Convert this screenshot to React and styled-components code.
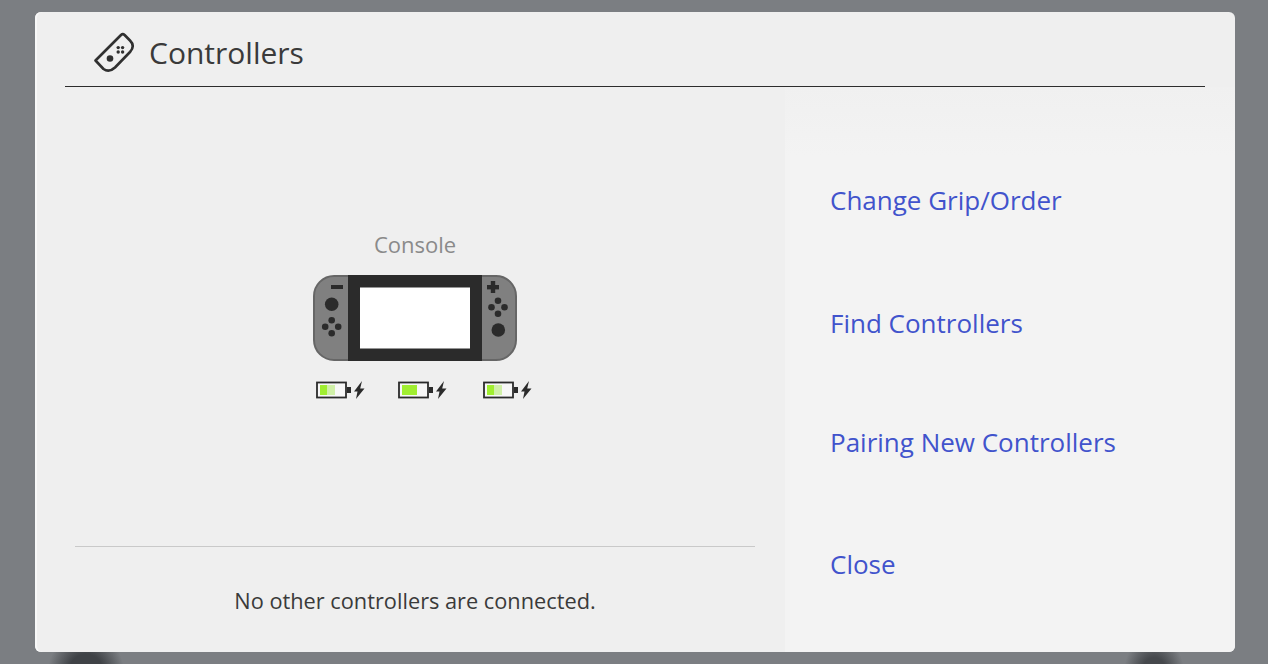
import styled, { createGlobalStyle } from "styled-components";

const GlobalStyle = createGlobalStyle`
  html, body {
    margin: 0;
    height: 100%;
  }
  body {
    font-family: "Open Sans", "Liberation Sans", sans-serif;
    background:
      radial-gradient(ellipse 38px 40px at 86px 672px, #3f4246 45%, rgba(63, 66, 70, 0) 100%),
      radial-gradient(ellipse 30px 36px at 1154px 672px, #45484c 40%, rgba(69, 72, 76, 0) 100%),
      #7b7e82;
    overflow: hidden;
  }
`;

const BATTERIES = [
  { full: 7, soft: 8, width: 82 },
  { full: 15, soft: 0, width: 85 },
  { full: 7, soft: 8, width: 49 },
];

const ACTIONS = ["Change Grip/Order", "Find Controllers", "Pairing New Controllers", "Close"];

const ControllerIcon = () => (
  <svg width="42" height="44" viewBox="0 0 42 44" fill="none">
    <path
      d="M2.5 30.5 L28 5 Q29.8 3.4 31.6 5 L37 10.5 Q42.5 16 37 22 L22 37.5 Q16 43 10.5 39 Z"
      stroke="#303030"
      strokeWidth="2.6"
      strokeLinejoin="round"
    />
    <circle cx="17" cy="28.5" r="3.3" fill="#303030" />
    <circle cx="25.2" cy="17.6" r="1.7" fill="#303030" />
    <circle cx="29.6" cy="17.6" r="1.7" fill="#303030" />
    <circle cx="25.2" cy="22" r="1.7" fill="#303030" />
    <circle cx="29.6" cy="22" r="1.7" fill="#303030" />
  </svg>
);

const Buttons = ({ x, y }) => (
  <g fill="#2b2b2b">
    <circle cx={x} cy={y - 6.5} r="3.3" />
    <circle cx={x} cy={y + 6.5} r="3.3" />
    <circle cx={x - 6.5} cy={y} r="3.3" />
    <circle cx={x + 6.5} cy={y} r="3.3" />
  </g>
);

const ConsoleDrawing = () => (
  <svg width="204" height="86" viewBox="0 0 204 86">
    <rect x="1" y="1" width="202" height="84" rx="20" fill="#808080" stroke="#666666" strokeWidth="2" />
    <rect x="35" y="0" width="134" height="86" fill="#2b2b2b" />
    <rect x="47" y="12.5" width="110" height="61" fill="#ffffff" />
    <rect x="18" y="10" width="12" height="4" fill="#2b2b2b" />
    <circle cx="18.7" cy="29.3" r="6.8" fill="#2b2b2b" />
    <Buttons x={18.7} y={51.7} />
    <rect x="174" y="10" width="12" height="4.4" fill="#2b2b2b" />
    <rect x="177.8" y="6" width="4.4" height="12" fill="#2b2b2b" />
    <Buttons x={185} y={32.3} />
    <circle cx="185.3" cy="55" r="6.8" fill="#2b2b2b" />
  </svg>
);

const Battery = ({ full, soft }) => (
  <svg width="49" height="18" viewBox="0 0 49 18">
    <rect x="1" y="1.5" width="29" height="15" fill="#f7f7f7" stroke="#2b2b2b" strokeWidth="1.8" />
    <rect x="4" y="4" width={full} height="10" fill="#a0ee30" />
    <rect x={4 + full} y="4" width={soft} height="10" fill="#d0f0a8" />
    <rect x="31" y="6" width="4" height="6" fill="#2b2b2b" />
    <path d="M46 0 L38 10.5 L41.5 10.5 L40 18 L48.5 7.5 L44.2 7.5 Z" fill="#2b2b2b" />
  </svg>
);

export default function App() {
  return (
    <>
      <GlobalStyle />
      <Page>
        <Modal>
          <Header>
            <ControllerIcon />
            <Title>Controllers</Title>
          </Header>
          <Body>
            <LeftPane>
              <ConsoleArea>
                <ConsoleLabel>Console</ConsoleLabel>
                <ConsoleDrawing />
                <BatteryRow>
                  {BATTERIES.map((b, i) => (
                    <BatterySlot key={i} $width={b.width}>
                      <Battery full={b.full} soft={b.soft} />
                    </BatterySlot>
                  ))}
                </BatteryRow>
              </ConsoleArea>
              <Message>No other controllers are connected.</Message>
            </LeftPane>
            <RightPane>
              {ACTIONS.map(label => (
                <Action key={label}>{label}</Action>
              ))}
            </RightPane>
          </Body>
        </Modal>
      </Page>
    </>
  );
}

const Page = styled.div`
  display: flex;
  justify-content: center;
  padding: 12px 0 0 2px;
`;

const Modal = styled.div`
  width: 1200px;
  height: 640px;
  display: flex;
  flex-direction: column;
  background: #efefef;
  border-radius: 6px;
  overflow: hidden;
  box-shadow: inset 2px 0 0 #f8f8f8;
`;

const Header = styled.div`
  height: 75px;
  margin: 0 30px;
  padding: 6px 0 0 28px;
  box-sizing: border-box;
  display: flex;
  align-items: center;
  gap: 14px;
  border-bottom: 1px solid #2d2d2d;
`;

const Title = styled.h1`
  margin: 0;
  font-size: 30px;
  font-weight: 400;
  color: #3a3a3a;
`;

const Body = styled.div`
  flex: 1;
  display: flex;
  min-height: 0;
`;

const LeftPane = styled.div`
  width: 750px;
  padding: 0 30px 0 40px;
  box-sizing: border-box;
  display: flex;
  flex-direction: column;
`;

const ConsoleArea = styled.div`
  height: 460px;
  padding-top: 142px;
  box-sizing: border-box;
  display: flex;
  flex-direction: column;
  align-items: center;
  border-bottom: 1px solid #c9c9c9;
`;

const ConsoleLabel = styled.div`
  font-size: 22px;
  line-height: 30px;
  margin-bottom: 16px;
  color: #8a8a8a;
`;

const BatteryRow = styled.div`
  display: flex;
  margin-top: 20px;
  padding-left: 17px;
`;

const BatterySlot = styled.div`
  width: ${p => p.$width}px;
  display: flex;
`;

const Message = styled.div`
  flex: 1;
  display: flex;
  align-items: center;
  justify-content: center;
  padding-top: 2px;
  font-size: 21.75px;
  color: #3a3a3a;
`;

const RightPane = styled.div`
  flex: 1;
  padding: 53px 0 0 45px;
  background: linear-gradient(#f0f0f0, #f3f3f3 70px);
  display: grid;
  grid-template-rows: 120px 126px 112px 132px;
  align-content: start;
`;

const Action = styled.div`
  display: flex;
  align-items: center;
  font-size: 26px;
  color: #4153cc;
`;
